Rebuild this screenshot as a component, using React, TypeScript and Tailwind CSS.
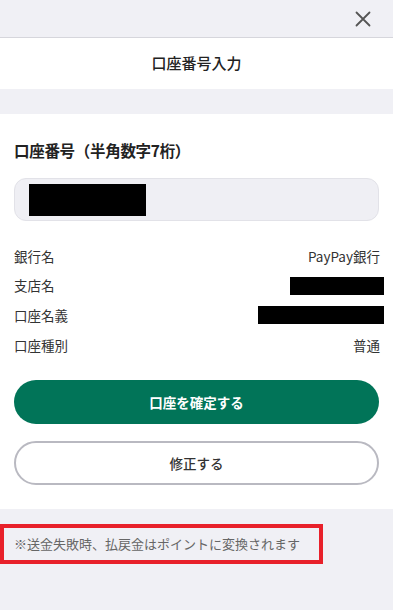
import React from 'react';

const FONT = { fontFamily: '"Noto Sans CJK JP", "Noto Sans", sans-serif' };

const rows = [
  { label: '銀行名', value: 'PayPay銀行' },
  { label: '支店名', mask: 'w-[94px]' },
  { label: '口座名義', mask: 'w-[126px]' },
  { label: '口座種別', value: '普通' },
];

export default function App() {
  return (
    <div className="w-[393px] h-[610px] bg-[#f0f0f5] text-[#222] overflow-hidden" style={FONT}>
      {/* Top bar */}
      <div className="h-[38px] flex items-center justify-end pr-[22px] border-b border-[#d6d6dc]">
        <svg width="16" height="16" viewBox="0 0 16 16" className="text-[#555]">
          <path d="M1.5 1.5 L14.5 14.5 M14.5 1.5 L1.5 14.5" stroke="currentColor" strokeWidth="1.8" strokeLinecap="round" />
        </svg>
      </div>

      {/* Header */}
      <div className="h-[51px] bg-white flex items-center justify-center">
        <h1 className="text-[15px] font-medium text-[#222]">口座番号入力</h1>
      </div>

      <div className="h-[25px]" />

      {/* Card */}
      <div className="bg-white px-[14px] pt-[24px] pb-[24px]">
        <h2 className="text-[15.5px] font-bold leading-[24px] tracking-[-0.3px]">口座番号（半角数字7桁）</h2>
        <div className="mt-[16px] h-[43px] rounded-[12px] bg-[#efeff4] border-[1.5px] border-[#e2e2e8] flex items-center pl-[14px]">
          <div className="w-[117px] h-[32px] bg-black" />
        </div>

        <div className="mt-[20px] flex flex-col">
          {rows.map((r) => (
            <div key={r.label} className="h-[29.7px] flex items-center justify-between text-[13.5px] text-[#333]">
              <span>{r.label}</span>
              {r.value ? (
                <span className="mr-[-1px]">{r.value}</span>
              ) : (
                <span className={`${r.mask} h-[18px] bg-black mr-[-5px]`} />
              )}
            </div>
          ))}
        </div>

        <button className="mt-[20px] w-full h-[44px] rounded-full bg-[#017458] text-white text-[13.5px] font-bold">
          口座を確定する
        </button>
        <button className="mt-[17px] w-full h-[44px] rounded-full bg-white border-2 border-[#b9b9c1] text-[#333] text-[13.5px] font-medium">
          修正する
        </button>
      </div>

      {/* Note */}
      <div className="mt-[15px] w-[323px] h-[40px] border-[4px] border-[#e8202a] flex items-center pl-[10px]">
        <p className="text-[13px] text-[#666]">※送金失敗時、払戻金はポイントに変換されます</p>
      </div>
    </div>
  );
}
